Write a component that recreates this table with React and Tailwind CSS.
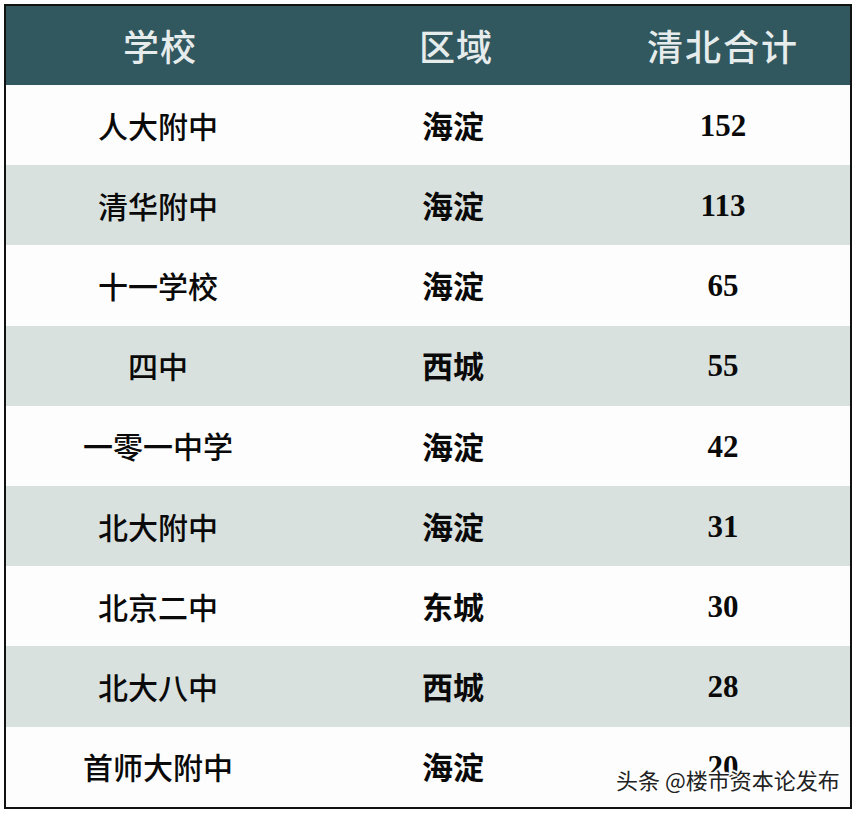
import React from "react";

const rows = [
  ["人大附中", "海淀", "152"],
  ["清华附中", "海淀", "113"],
  ["十一学校", "海淀", "65"],
  ["四中", "西城", "55"],
  ["一零一中学", "海淀", "42"],
  ["北大附中", "海淀", "31"],
  ["北京二中", "东城", "30"],
  ["北大八中", "西城", "28"],
  ["首师大附中", "海淀", "20"],
];

const cjk = { fontFamily: '"Noto Sans CJK SC", sans-serif' };
const num = { fontFamily: '"Liberation Serif", serif' };

export default function App() {
  return (
    <div className="w-[858px] h-[814px] bg-white pt-[4px] pl-[4px]">
      <div className="relative w-[848px] h-[805px] border-2 border-[#111] flex flex-col">
        <div className="h-[79px] bg-[#31575f] grid grid-cols-[304px_290px_1fr] items-center text-[#e6ecec] text-[36px] font-medium pb-[2px]" style={cjk}>
          <div className="text-center pl-[4px] tracking-[1px]">学校</div>
          <div className="text-center pl-[2px] tracking-[1px]">区域</div>
          <div className="text-center pr-[4px] tracking-[2px]">清北合计</div>
        </div>
        {rows.map((r, i) => (
          <div
            key={i}
            className={
              "h-[80.2px] grid grid-cols-[304px_290px_1fr] items-center text-[#0a0a0a] " +
              (i % 2 === 1 ? "bg-[#d9e1de]" : "bg-[#fdfdfd]")
            }
          >
            <div className="text-center text-[30px] font-medium" style={cjk}>{r[0]}</div>
            <div className="text-center text-[31px] font-bold pr-[4px]" style={cjk}>{r[1]}</div>
            <div className="text-center text-[31px] font-bold pr-[4px] pt-[2px]" style={num}>{r[2]}</div>
          </div>
        ))}
        <div
          className="absolute left-[610px] top-[757px] text-[22px] text-[#222] whitespace-nowrap"
          style={{
            ...cjk,
            textShadow:
              "0 0 2px #fff, 1px 1px 0 #fff, -1px -1px 0 #fff, 1px -1px 0 #fff, -1px 1px 0 #fff, 0 2px 1px #fff, 0 -2px 1px #fff, 2px 0 1px #fff, -2px 0 1px #fff",
          }}
        >
          头条 @楼市资本论发布
        </div>
      </div>
    </div>
  );
}
